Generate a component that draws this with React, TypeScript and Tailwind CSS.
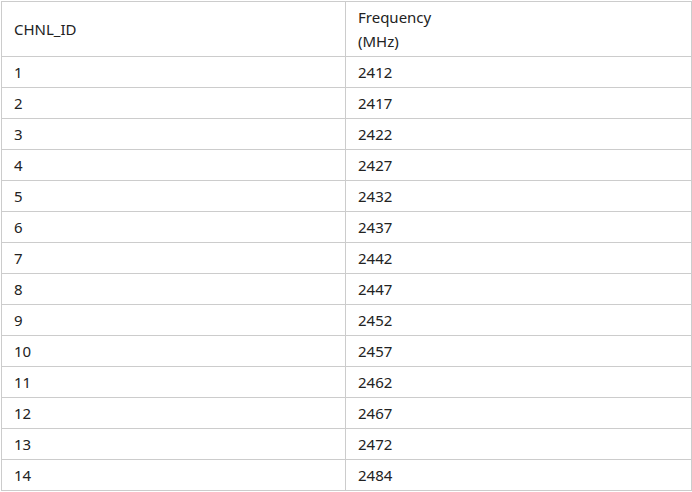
import React from "react";

const rows: [string, string][] = [
  ["1", "2412"],
  ["2", "2417"],
  ["3", "2422"],
  ["4", "2427"],
  ["5", "2432"],
  ["6", "2437"],
  ["7", "2442"],
  ["8", "2447"],
  ["9", "2452"],
  ["10", "2457"],
  ["11", "2462"],
  ["12", "2467"],
  ["13", "2472"],
  ["14", "2484"],
];

export default function App() {
  return (
    <div className="bg-white w-[692px] h-[492px] pt-px pl-px">
      <table
        className="border-collapse w-[690px] text-[15px] text-[#222222] table-fixed"
        style={{ fontFamily: '"Noto Sans", "Open Sans", sans-serif' }}
      >
        <colgroup>
          <col className="w-[344px]" />
          <col className="w-[346px]" />
        </colgroup>
        <thead>
          <tr className="h-[55px]">
            <th className="border border-[#cccccc] px-3 py-0 text-left font-normal leading-[24px]">
              CHNL_ID
            </th>
            <th className="border border-[#cccccc] px-3 py-0 text-left font-normal leading-[24px]">
              Frequency
              <br />
              (MHz)
            </th>
          </tr>
        </thead>
        <tbody>
          {rows.map(([id, f]) => (
            <tr key={id} className="h-[31px]">
              <td className="border border-[#cccccc] px-3 py-0 leading-[24px]">{id}</td>
              <td className="border border-[#cccccc] px-3 py-0 leading-[24px]">{f}</td>
            </tr>
          ))}
        </tbody>
      </table>
    </div>
  );
}
